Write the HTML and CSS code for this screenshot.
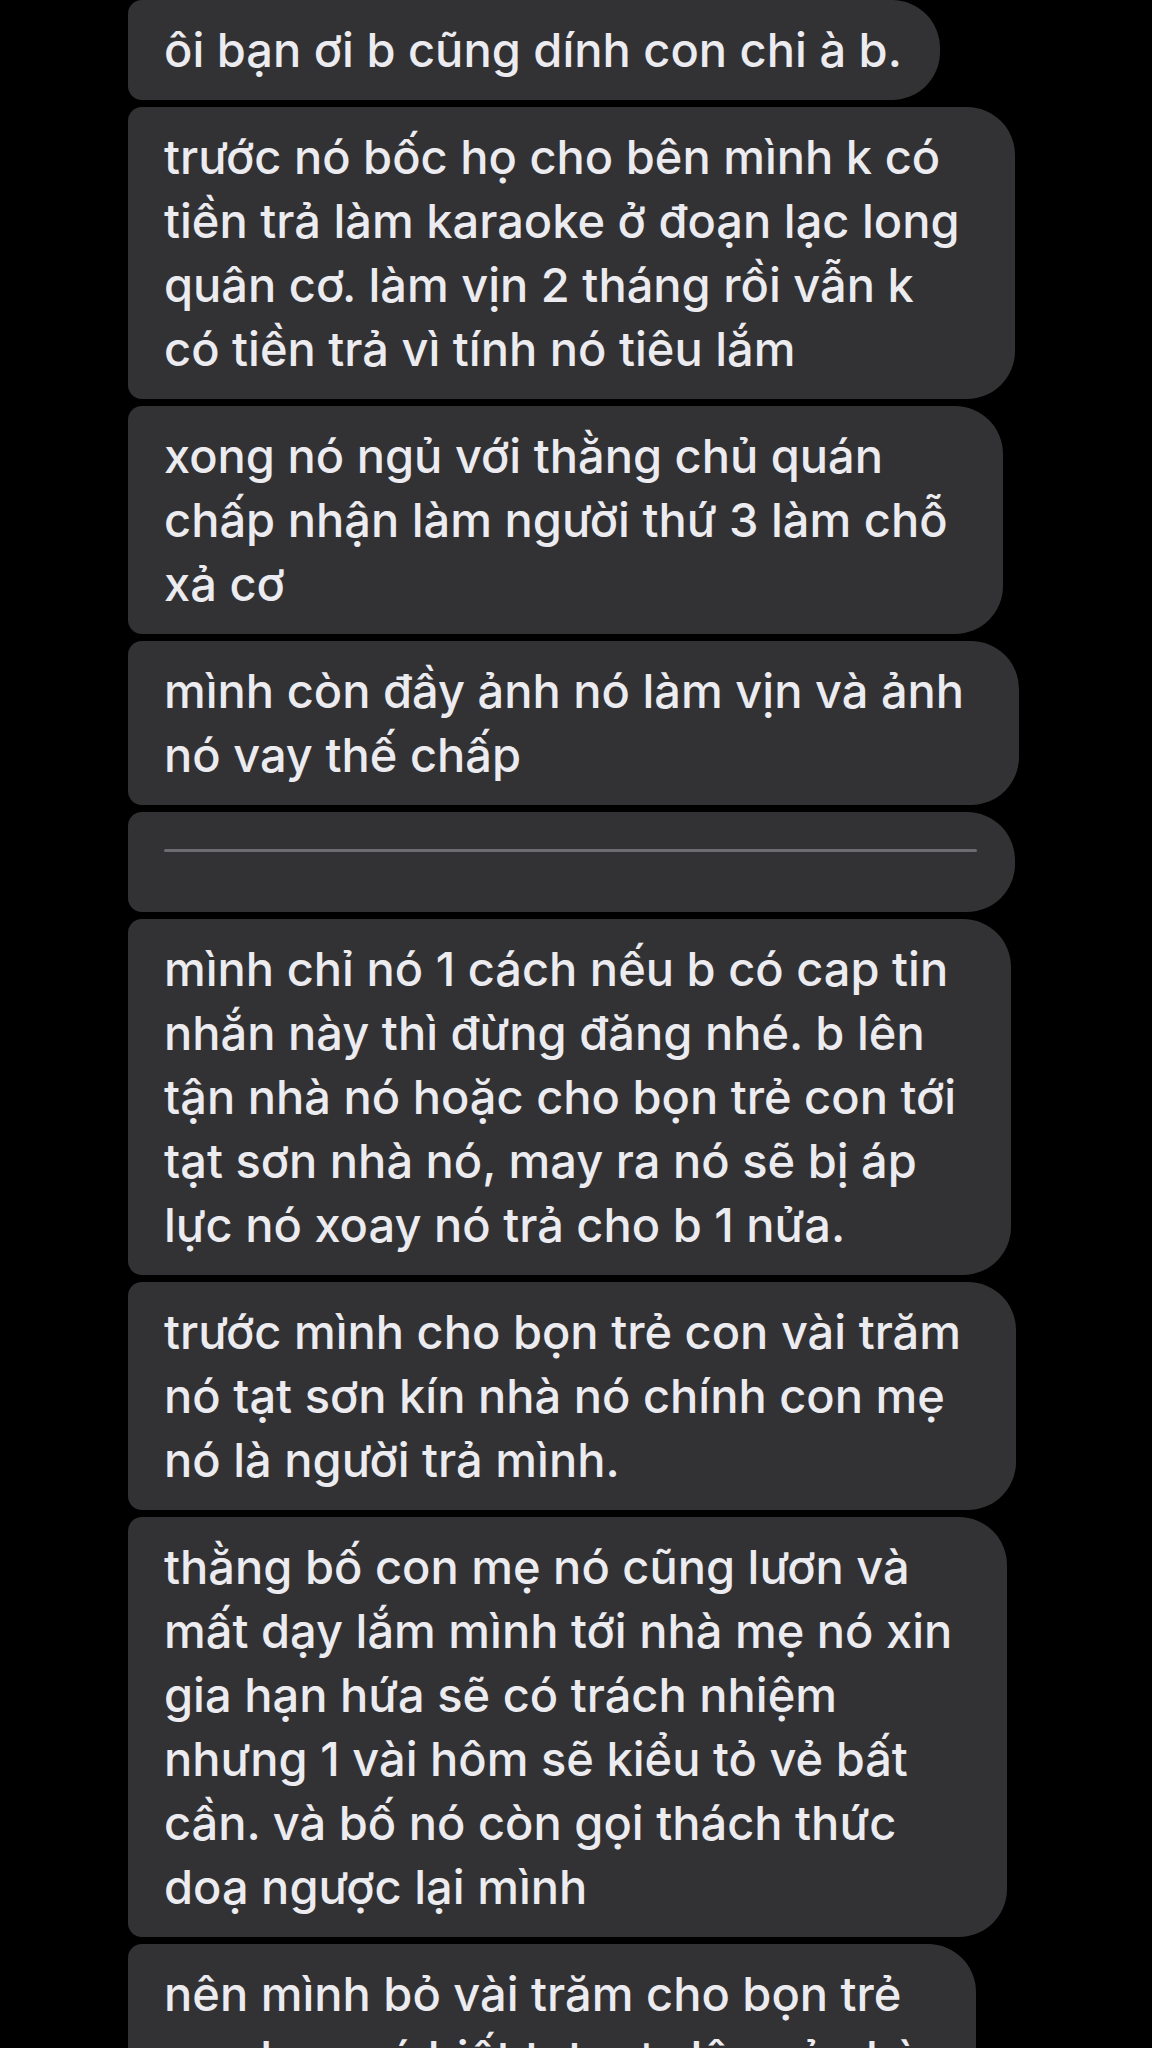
FILE: index.html
```html
<!DOCTYPE html>
<html lang="vi">
<head>
    <meta charset="UTF-8">
    <meta name="viewport" content="width=device-width, initial-scale=1.0">
    <title>Tin nhắn</title>
    <link rel="stylesheet" href="styles.css">
</head>
<body>
    <div class="thread">
        <div class="bubble">ôi bạn ơi b cũng dính con chi à b.</div>

        <div class="bubble multi">trước nó bốc họ cho bên mình k có<br>tiền trả làm karaoke ở đoạn lạc long<br>quân cơ. làm vịn 2 tháng rồi vẫn k<br>có tiền trả vì tính nó tiêu lắm</div>

        <div class="bubble multi">xong nó ngủ với thằng chủ quán<br>chấp nhận làm người thứ 3 làm chỗ<br>xả cơ</div>

        <div class="bubble multi">mình còn đầy ảnh nó làm vịn và ảnh<br>nó vay thế chấp</div>

        <!-- tin nhắn trống, chỉ có một đường gạch -->
        <div class="bubble bubble-rule">
            <div class="rule"></div>
        </div>

        <div class="bubble multi">mình chỉ nó 1 cách nếu b có cap tin<br>nhắn này thì đừng đăng nhé. b lên<br>tận nhà nó hoặc cho bọn trẻ con tới<br>tạt sơn nhà nó, may ra nó sẽ bị áp<br>lực nó xoay nó trả cho b 1 nửa.</div>

        <div class="bubble multi">trước mình cho bọn trẻ con vài trăm<br>nó tạt sơn kín nhà nó chính con mẹ<br>nó là người trả mình.</div>

        <div class="bubble multi">thằng bố con mẹ nó cũng lươn và<br>mất dạy lắm mình tới nhà mẹ nó xin<br>gia hạn hứa sẽ có trách nhiệm<br>nhưng 1 vài hôm sẽ kiểu tỏ vẻ bất<br>cần. và bố nó còn gọi thách thức<br>doạ ngược lại mình</div>

        <div class="bubble multi">nên mình bỏ vài trăm cho bọn trẻ<br>con bọn nó biết tạt sơn lên cả nhà</div>
    </div>
</body>
</html>
```

FILE: styles.css
```css
body {
    margin: 0;
    padding: 0;
    background-color: #000;
    font-family: 'Inter', 'Noto Sans', sans-serif;
    overflow: hidden;
}

.thread {
    display: flex;
    flex-direction: column;
    align-items: flex-start;
    gap: 7px;
    padding-left: 128px;
}

.bubble {
    width: fit-content;
    background-color: #323234;
    color: #ebebf0;
    font-size: 47px;
    font-weight: 500;
    line-height: 64px;
    white-space: nowrap;
    padding: 18px 38px 18px 36px;
    border-radius: 14px 48px 48px 14px;
}

/* tin nhiều dòng: bong bóng rộng hơn một chút bên phải */
.bubble.multi {
    padding-right: 55px;
}

.bubble-rule {
    width: 813px;
    height: 64px;
}

.rule {
    height: 3px;
    margin-top: 19px;
    background-color: #6c6c71;
    border-radius: 2px;
}
```
